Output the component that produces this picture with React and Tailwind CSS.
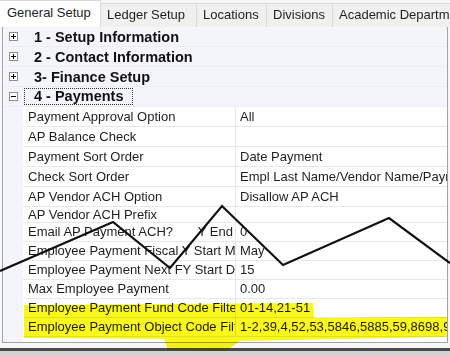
import React from 'react';

const tabs = ['Ledger Setup', 'Locations', 'Divisions', 'Academic Departments'];
const tabWidths = ['w-[96px]', 'w-[70px]', 'w-[66px]', 'w-[140px]'];

const categories = [
  { label: '1 - Setup Information', open: false },
  { label: '2 - Contact Information', open: false },
  { label: '3- Finance Setup', open: false },
  { label: '4 - Payments', open: true },
];

const props = [
  { name: 'Payment Approval Option', value: 'All', h: 'h-[20px]' },
  { name: 'AP Balance Check', value: '', h: 'h-[20px]' },
  { name: 'Payment Sort Order', value: 'Date Payment', h: 'h-[20px]' },
  { name: 'Check Sort Order', value: 'Empl Last Name/Vendor Name/Payment Date', h: 'h-[20px]' },
  { name: 'AP Vendor ACH Option', value: 'Disallow AP ACH', h: 'h-[20px]' },
  { name: 'AP Vendor ACH Prefix', value: '', h: 'h-[16px]' },
  { name: 'Email AP Payment ACH?', tail: 'Y End', value: '0', h: 'h-[19px]' },
  { name: 'Employee Payment Fiscal Y Start Month', value: 'May', h: 'h-[19px]' },
  { name: 'Employee Payment Next FY Start Day', value: '15', h: 'h-[19px]' },
  { name: 'Max Employee Payment', value: '0.00', h: 'h-[19px]' },
  { name: 'Employee Payment Fund Code Filter', value: '01-14,21-51', h: 'h-[19px]' },
  { name: 'Employee Payment Object Code Filter', value: '1-2,39,4,52,53,5846,5885,59,8698,9100', h: 'h-[19px]' },
];

function ExpandBox({ open }) {
  return (
    <span className="relative w-[9px] h-[9px] border border-[#8e8e8e] bg-white shrink-0">
      <span className="absolute left-[1px] top-[3px] w-[5px] h-[1px] bg-black" />
      {!open && <span className="absolute left-[3px] top-[1px] w-[1px] h-[5px] bg-black" />}
    </span>
  );
}

function App() {
  return (
    <div className="relative w-[450px] h-[356px] overflow-hidden bg-[#f7f7f7] text-[13px] text-[#1e1e1e] font-['Liberation_Sans',Arial,sans-serif]">
      {/* Tabs */}
      <div className="flex items-end h-[27px] overflow-hidden">
        <div className="shrink-0 h-[27px] w-[101px] bg-white border-r border-t border-[#d9d9d9] pl-[7px] pt-[3px] leading-[18px] whitespace-nowrap z-10">
          General Setup
        </div>
        {tabs.map((t, i) => (
          <div
            key={t}
            className={`${tabWidths[i]} shrink-0 h-[24px] bg-[#f0f0f0] border-r border-t border-[#d9d9d9] pl-[6px] pt-[2px] leading-[18px] whitespace-nowrap overflow-hidden`}
          >
            {t}
          </div>
        ))}
      </div>

      {/* Property grid panel */}
      <div className="ml-[2px] w-[446px] h-[317px] -mt-px border border-[#a3a3a3] bg-[#f4f5fa] flex flex-col overflow-hidden">
        {categories.map((c) => (
          <div key={c.label} className="h-[20px] shrink-0 flex items-center pl-[6px] border-b border-[#eceef4]">
            <ExpandBox open={c.open} />
            {c.open ? (
              <span className="ml-[6px] px-[9px] leading-[15px] border border-dotted border-[#333] font-bold text-[14.5px] text-[#111]">
                {c.label}
              </span>
            ) : (
              <span className="ml-[16px] font-bold text-[14.5px] text-[#111] leading-[18px]">{c.label}</span>
            )}
          </div>
        ))}

        {props.map((p) => (
          <div key={p.name} className={`${p.h} shrink-0 flex`}>
            <div className="w-[20px] shrink-0" />
            <div className="w-[213px] shrink-0 flex items-center justify-between pl-[5px] pr-[2px] bg-white border-b border-r border-[#e6e8ee] whitespace-nowrap overflow-hidden">
              <span>{p.name}</span>
              {p.tail && <span>{p.tail}</span>}
            </div>
            <div className="flex-1 flex items-center pl-[4px] bg-white border-b border-[#e6e8ee] whitespace-nowrap overflow-hidden">
              {p.value}
            </div>
          </div>
        ))}
        <div className="flex-1 flex">
          <div className="w-[20px] shrink-0" />
          <div className="flex-1 bg-white" />
        </div>
      </div>

      {/* Window bottom edge */}
      <div className="h-[5px] bg-[#f7f7f7]" />
      <div className="h-[3px] bg-[#4a4a4a]" />
      <div className="h-[10px] bg-[#d2d2d2]" />

      {/* Yellow highlighter marks */}
      <svg className="absolute inset-0 pointer-events-none mix-blend-multiply" width="450" height="356">
        <path d="M24,305 L313,303 L314,318 L447,317 L447,337 L240,341 L226,351 L168,350 L164,339 L24,338 Z" fill="#f9f71c" />
      </svg>

      {/* Annotation zigzag */}
      <svg className="absolute inset-0 pointer-events-none" width="450" height="356">
        <polyline
          points="0,271 113,222 170,268 222,206 283,265 389,218 450,263"
          fill="none"
          stroke="#111"
          strokeWidth="2.2"
          strokeLinejoin="miter"
        />
      </svg>
    </div>
  );
}

export default App;
